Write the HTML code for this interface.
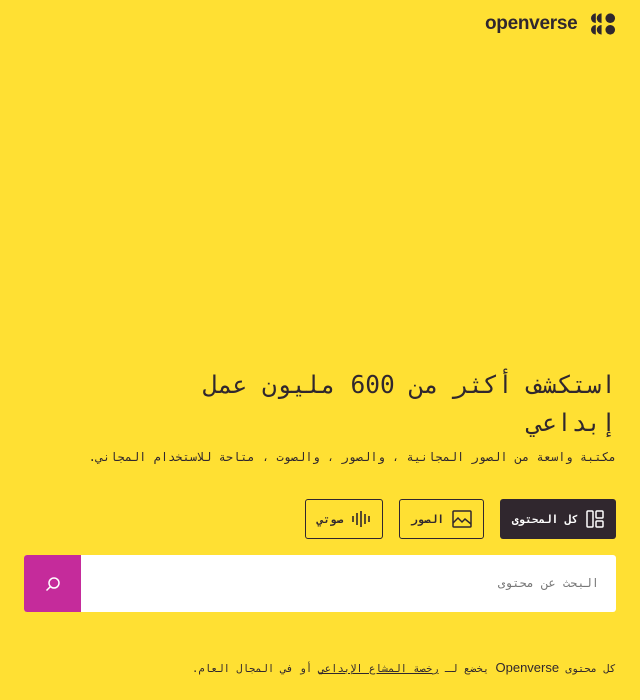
<!DOCTYPE html>
<html lang="ar" dir="rtl"><head><meta charset="utf-8">
<style>
*{margin:0;padding:0;box-sizing:border-box}
html,body{width:640px;height:700px;background:#ffe033;overflow:hidden}
body{position:relative;font-family:"DejaVu Sans Mono","Liberation Mono",monospace;color:#30272e}
.logo{position:absolute;left:485px;top:12px;direction:ltr;display:flex;align-items:center}
.logo span{font-family:"Liberation Sans",sans-serif;font-weight:bold;font-size:19px;letter-spacing:-0.3px;color:#30272e}
h1{position:absolute;right:24px;top:366px;width:440px;font-weight:normal;font-size:24.5px;line-height:38px;text-align:right;color:#30272e}
.sub{position:absolute;right:24px;top:450px;font-size:12px;color:#30272e;white-space:nowrap}
.btn{position:absolute;top:499px;height:40px;border:1px solid #30272e;border-radius:3px;display:flex;align-items:center;justify-content:center;gap:8px;font-size:11px;font-weight:bold}
.b1{left:500px;width:116px;background:#30272e;color:#fff;border:none}
.b2{left:399px;width:85px}
.b3{left:305px;width:78px}
.search{position:absolute;left:24px;top:555px;width:592px;height:57px;background:#fff;border-radius:3px;overflow:hidden}
.sbtn{position:absolute;left:0;top:0;width:57px;height:57px;background:#c52b9b}
.ph{position:absolute;right:17px;top:21px;font-size:12px;color:#777}
.foot{position:absolute;right:24px;top:660px;font-size:10.5px;color:#30272e;white-space:nowrap}
.foot u{text-decoration:underline}
</style></head><body>
<div class="logo"><span>openverse</span>
<svg width="25" height="24" viewBox="0 0 26 24" style="margin-left:14px">
<g fill="#30272e"><path d="M5 1a5 5 0 0 0 0 10z"/><path d="M11 1a5 5 0 0 0 0 10z"/><circle cx="20" cy="6" r="5"/>
<path d="M5 13a5 5 0 0 0 0 10z"/><path d="M11 13a5 5 0 0 0 0 10z"/><circle cx="20" cy="18" r="5"/></g></svg></div>
<h1>استكشف أكثر من 600 مليون عمل إبداعي</h1>
<div class="sub">مكتبة واسعة من الصور المجانية ، والصور ، والصوت ، متاحة للاستخدام المجاني.</div>
<div class="btn b1"><svg width="18" height="18" viewBox="0 0 18 18" fill="none" stroke="#fff" stroke-width="1.5"><rect x="1" y="1" width="6" height="16" rx="1"/><rect x="10" y="1" width="7" height="7" rx="1"/><rect x="10" y="11" width="7" height="6" rx="1"/></svg><span>كل المحتوى</span></div>
<div class="btn b2"><svg width="20" height="18" viewBox="0 0 20 18" fill="none" stroke="#30272e" stroke-width="1.5"><rect x="1" y="1" width="18" height="16" rx="1"/><path d="M1 13l5-5 4 4 3-3 6 5"/></svg><span>الصور</span></div>
<div class="btn b3"><svg width="20" height="18" viewBox="0 0 20 18" stroke="#30272e" stroke-width="1.6"><path d="M2 6v6M6 3v12M10 1v16M14 4v10M18 6v6"/></svg><span>صوتي</span></div>
<div class="search"><div class="sbtn"><svg width="57" height="57" viewBox="0 0 57 57" fill="none" stroke="#fff" stroke-width="1.5"><circle cx="30" cy="28" r="5"/><path d="M26.5 31.5l-4 4"/></svg></div>
<div class="ph">البحث عن محتوى</div></div>
<div class="foot">كل محتوى <span style="font-family:'Liberation Sans',sans-serif;font-size:13px">Openverse</span> يخضع لـ <u>رخصة المشاع الإبداعي</u> أو في المجال العام.</div>
</body></html>
